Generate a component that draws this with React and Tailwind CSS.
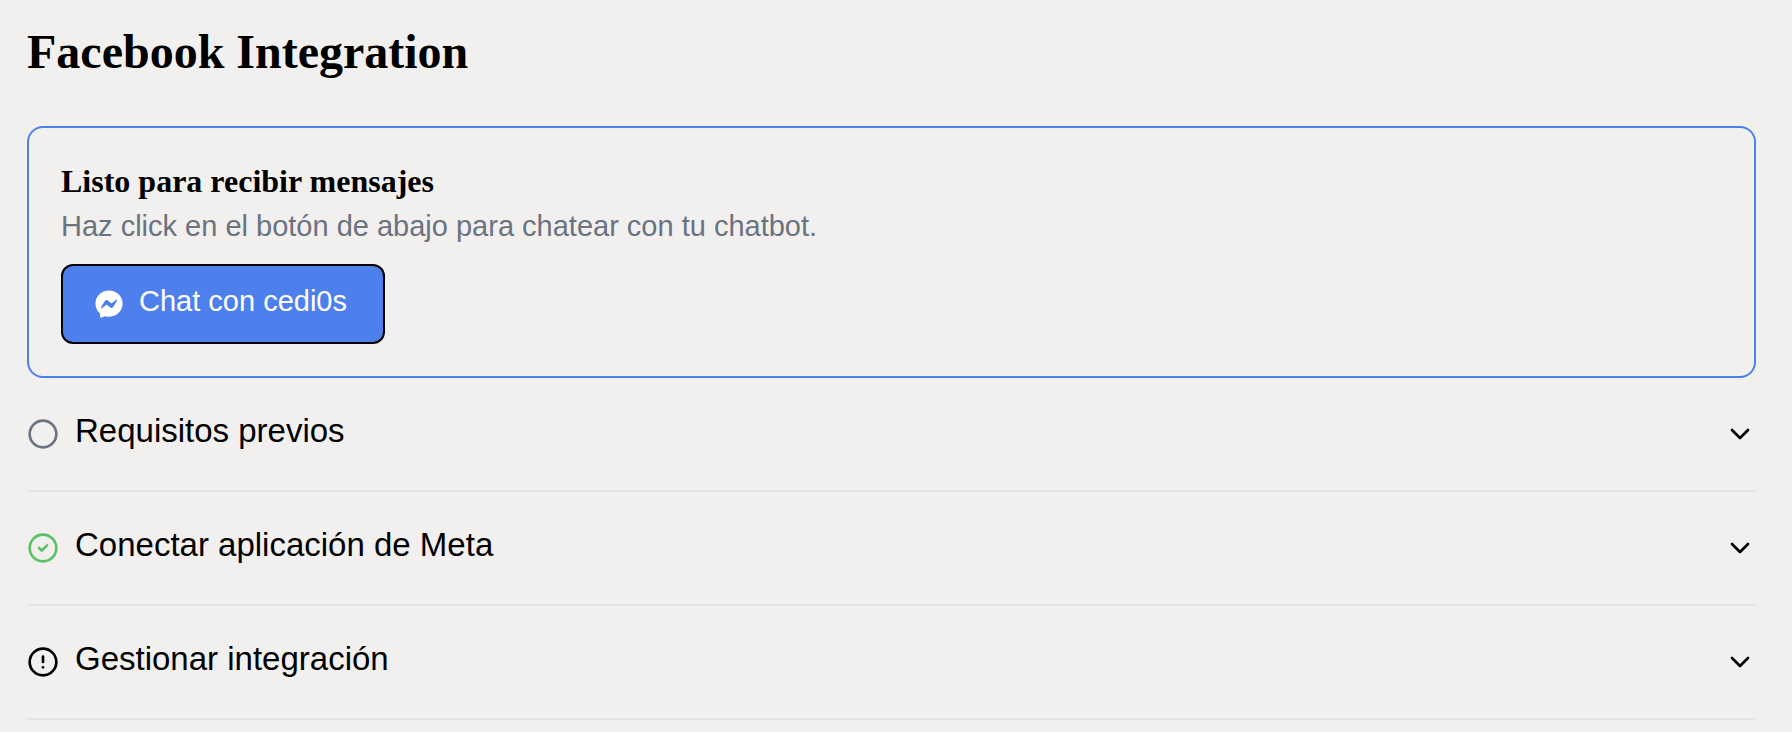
import { ChevronDown, Circle, CircleAlert, CircleCheck } from "lucide-react";
import { FaFacebookMessenger } from "react-icons/fa";

const sections = [
  { title: "Requisitos previos", Icon: Circle, color: "text-[#6b7280]" },
  { title: "Conectar aplicación de Meta", Icon: CircleCheck, color: "text-[#58c265]" },
  { title: "Gestionar integración", Icon: CircleAlert, color: "text-black" },
];

function Section({ title, Icon, color }) {
  return (
    <h3 className="border-b-2 border-[#e5e4e2]">
      <button
        type="button"
        aria-expanded="false"
        className="flex h-28 w-full items-center gap-4 text-left"
      >
        <Icon size={32} className={`shrink-0 ${color}`} aria-hidden="true" />
        <span className="grow pb-1.5 text-[33px] leading-10">{title}</span>
        <ChevronDown size={32} className="shrink-0" aria-hidden="true" />
      </button>
    </h3>
  );
}

export default function App() {
  return (
    <main className="min-h-screen bg-[#f1f0ee] pr-9 pl-[27px] pt-6 font-['Liberation_Sans',Arial,sans-serif] text-black">
      <h1 className="font-['Liberation_Serif',serif] text-5xl leading-14 font-bold">
        Facebook Integration
      </h1>
      <section className="mt-[46px] rounded-2xl border-2 border-[#4d80ed] p-8">
        <h2 className="font-['Liberation_Serif',serif] text-[32px] leading-[42px] font-bold">
          Listo para recibir mensajes
        </h2>
        <p className="mt-1 text-[29px] leading-10 text-[#6b7280]">
          Haz click en el botón de abajo para chatear con tu chatbot.
        </p>
        <a
          href="#chat"
          className="mt-[18px] inline-flex h-20 min-w-[324px] items-center gap-4 rounded-xl border-2 border-black bg-[#4d80ed] px-8 text-[29px] leading-10 text-white"
        >
          <FaFacebookMessenger size={28} aria-hidden="true" />
          <span className="pb-1.5">Chat con cedi0s</span>
        </a>
      </section>
      {sections.map((section) => (
        <Section key={section.title} {...section} />
      ))}
    </main>
  );
}
